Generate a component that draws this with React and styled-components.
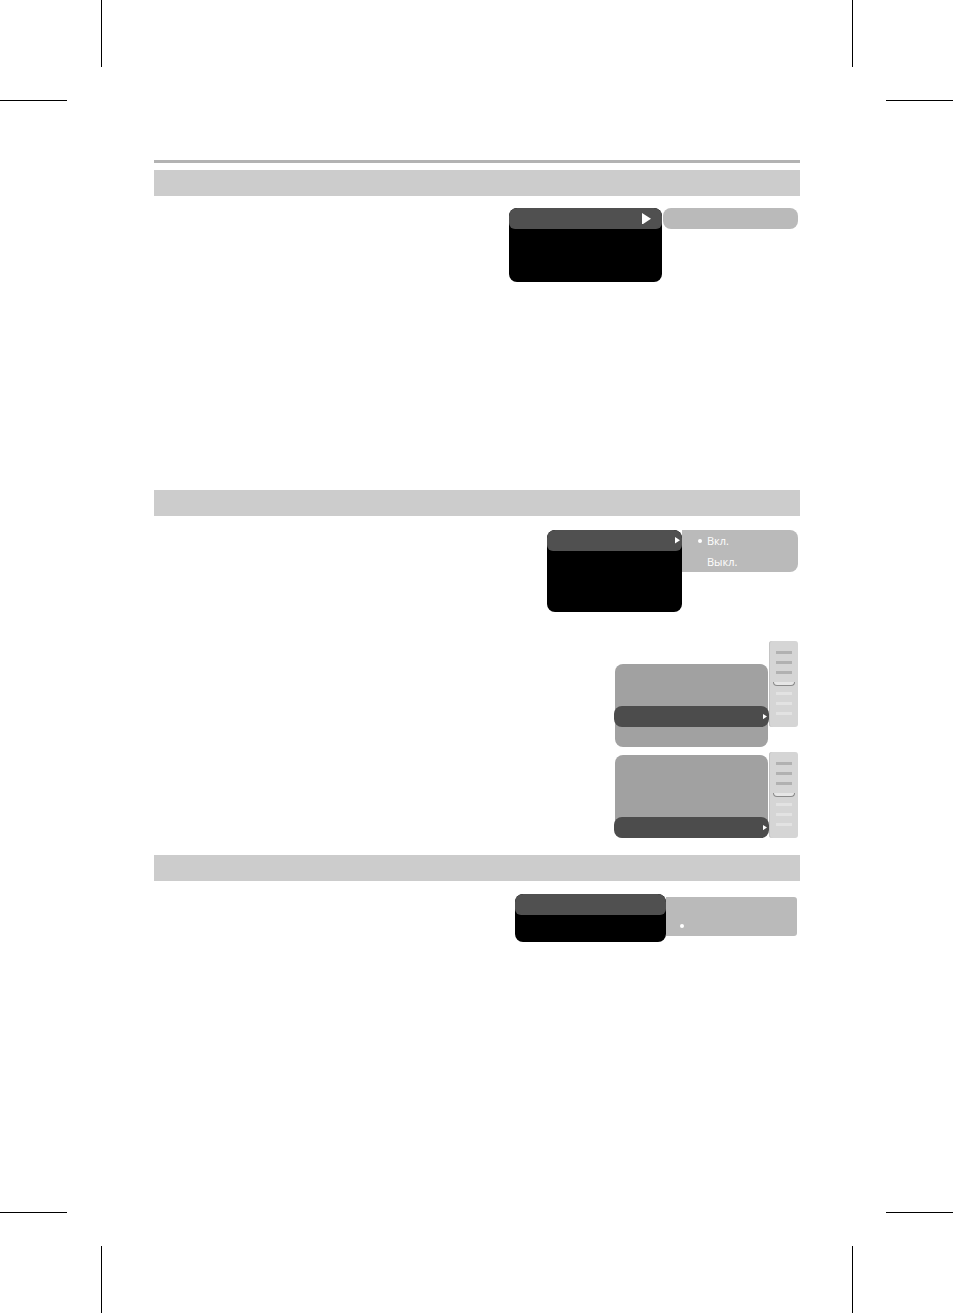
import React from "react";
import styled, { createGlobalStyle } from "styled-components";

const Global = createGlobalStyle`
  html, body { margin: 0; padding: 0; background: #fff; }
  body { font-family: "Open Sans", "Noto Sans", sans-serif; }
`;

const Page = styled.div`
  position: relative;
  width: 953px;
  height: 1313px;
  overflow: hidden;
  background: #fff;
`;

const Mark = styled.div`
  position: absolute;
  background: #000;
  ${(p) => (p.$v ? `width: 1px; height: 67px;` : `height: 1px; width: 67px;`)}
  left: ${(p) => p.$x}px;
  top: ${(p) => p.$y}px;
`;

const Column = styled.div`
  margin-left: 154px;
  width: 646px;
  padding-top: 160px;
  display: flex;
  flex-direction: column;
`;

const Rule = styled.div`
  height: 3px;
  background: #b3b3b3;
  margin-bottom: 7px;
`;

const SectionBar = styled.div`
  height: 26px;
  background: #cccccc;
`;

const SectionBody = styled.div`
  height: ${(p) => p.$h}px;
  padding-top: ${(p) => p.$pt}px;
  padding-right: ${(p) => p.$pr || 2}px;
  box-sizing: border-box;
  display: flex;
  flex-direction: column;
  align-items: flex-end;
`;

const MenuRow = styled.div`
  display: flex;
  align-items: flex-start;
  margin-top: ${(p) => p.$mt || 0}px;
`;

const MainMenu = styled.div`
  width: ${(p) => p.$w}px;
  height: ${(p) => p.$h}px;
  background: #000;
  border-radius: 8px;
  overflow: hidden;
`;

const MenuHead = styled.div`
  height: 21px;
  background: #505050;
  border-radius: 8px 8px 6px 6px;
  display: flex;
  align-items: center;
  justify-content: flex-end;
  padding-right: ${(p) => p.$pr}px;
`;

const Pill = styled.div`
  width: ${(p) => p.$w}px;
  height: 21px;
  margin-left: 1px;
  background: #bababa;
  border-radius: 8px;
`;

const SubPanel = styled.div`
  width: ${(p) => p.$w}px;
  height: ${(p) => p.$h}px;
  margin-top: ${(p) => p.$mt || 0}px;
  background: #bababa;
  border-radius: ${(p) => p.$r};
  display: flex;
  flex-direction: column;
  padding-top: ${(p) => p.$pt || 0}px;
  box-sizing: border-box;
`;

const OptRow = styled.div`
  height: 21px;
  display: flex;
  align-items: center;
  padding-left: ${(p) => p.$pl}px;
  color: #fff;
  font-size: 11px;
  line-height: 1;
`;

const Dot = styled.span`
  width: 4px;
  height: 4px;
  border-radius: 50%;
  background: #fff;
  margin-right: 5px;
`;

const Spacer = styled.span`
  width: 9px;
`;

const ListWrap = styled.div`
  display: flex;
  align-items: flex-start;
`;

const ListBox = styled.div`
  width: 153px;
  height: ${(p) => p.$h}px;
  margin-top: ${(p) => p.$mt}px;
  background: #a1a1a1;
  border-radius: 8px;
  display: flex;
  flex-direction: column;
  padding-top: ${(p) => p.$barTop}px;
  box-sizing: border-box;
`;

const ListBar = styled.div`
  height: 21px;
  margin: 0 -1px 0 -1px;
  background: #4c4c4c;
  border-radius: 8px;
  display: flex;
  align-items: center;
  justify-content: flex-end;
  padding-right: 2px;
`;

const Scroll = styled.div`
  width: 29px;
  height: ${(p) => p.$h}px;
  margin-left: 1px;
  background: #d5d5d5;
  border-radius: 3px;
  box-shadow: inset 1px 0 0 #c4c4c4;
  display: flex;
  flex-direction: column;
  align-items: center;
  padding-top: 10px;
  box-sizing: border-box;
`;

const ScrollLine = styled.div`
  width: 16px;
  height: 3px;
  background: ${(p) => (p.$light ? "#e2e2e2" : "#b1b1b1")};
  margin-bottom: 7px;
`;

const Thumb = styled.div`
  width: 20px;
  height: 3px;
  border: 1px solid #8a8a8a;
  border-top: none;
  border-radius: 0 0 4px 4px;
  margin-top: 1px;
  margin-bottom: 6px;
  background: #e6e6e6;
`;

const Tri = ({ size }) => (
  <svg width={size} height={size * 1.3} viewBox="0 0 10 13" style={{ display: "block" }}>
    <polygon points="0,0 10,6.5 0,13" fill="#fff" />
  </svg>
);

const ScrollBar = ({ h }) => (
  <Scroll $h={h}>
    <ScrollLine />
    <ScrollLine />
    <ScrollLine />
    <Thumb />
    <ScrollLine $light />
    <ScrollLine $light />
    <ScrollLine $light />
  </Scroll>
);

export default function App() {
  return (
    <Page>
      <Global />
      <Mark $v $x={101} $y={0} />
      <Mark $x={0} $y={100} />
      <Mark $v $x={852} $y={0} />
      <Mark $x={886} $y={100} />
      <Mark $x={0} $y={1212} />
      <Mark $v $x={101} $y={1246} />
      <Mark $x={886} $y={1212} />
      <Mark $v $x={852} $y={1246} />

      <Column>
        <Rule />
        <SectionBar />
        <SectionBody $h={294} $pt={12}>
          <MenuRow>
            <MainMenu $w={153} $h={74}>
              <MenuHead $pr={11}>
                <Tri size={9} />
              </MenuHead>
            </MainMenu>
            <Pill $w={135} />
          </MenuRow>
        </SectionBody>

        <SectionBar />
        <SectionBody $h={339} $pt={14}>
          <MenuRow>
            <MainMenu $w={135} $h={82}>
              <MenuHead $pr={2}>
                <Tri size={5} />
              </MenuHead>
            </MainMenu>
            <SubPanel $w={116} $h={42} $r="0 8px 8px 0">
              <OptRow $pl={16}>
                <Dot />
                Вкл.
              </OptRow>
              <OptRow $pl={16}>
                <Spacer />
                Выкл.
              </OptRow>
            </SubPanel>
          </MenuRow>

          <MenuRow $mt={29}>
            <ListWrap>
              <ListBox $h={83} $mt={23} $barTop={42}>
                <ListBar>
                  <Tri size={4} />
                </ListBar>
              </ListBox>
              <ScrollBar h={86} />
            </ListWrap>
          </MenuRow>

          <MenuRow $mt={5}>
            <ListWrap>
              <ListBox $h={83} $mt={3} $barTop={62}>
                <ListBar>
                  <Tri size={4} />
                </ListBar>
              </ListBox>
              <ScrollBar h={86} />
            </ListWrap>
          </MenuRow>
        </SectionBody>

        <SectionBar />
        <SectionBody $h={300} $pt={13} $pr={3}>
          <MenuRow>
            <MainMenu $w={151} $h={48}>
              <MenuHead $pr={0} />
            </MainMenu>
            <SubPanel $w={131} $h={39} $mt={3} $r="0 3px 3px 0" $pt={18}>
              <OptRow $pl={14}>
                <Dot />
              </OptRow>
            </SubPanel>
          </MenuRow>
        </SectionBody>
      </Column>
    </Page>
  );
}
